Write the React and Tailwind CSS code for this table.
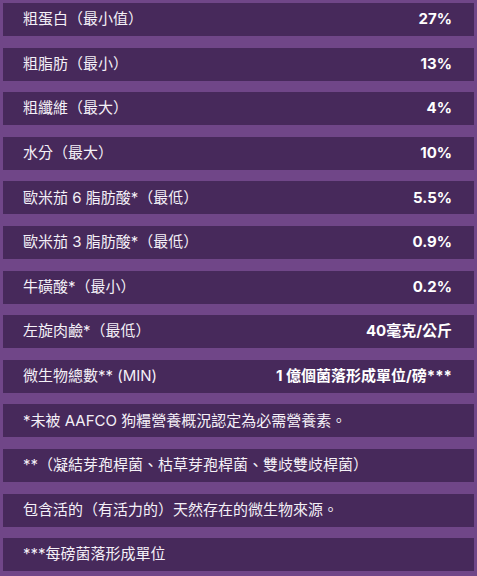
import React from 'react';

const rows = [
    { label: '粗蛋白（最小值）', value: '27%' },
    { label: '粗脂肪（最小）', value: '13%' },
    { label: '粗纖維（最大）', value: '4%' },
    { label: '水分（最大）', value: '10%' },
    { label: '歐米茄 6 脂肪酸*（最低）', value: '5.5%' },
    { label: '歐米茄 3 脂肪酸*（最低）', value: '0.9%' },
    { label: '牛磺酸*（最小）', value: '0.2%' },
    { label: '左旋肉鹼*（最低）', value: '40毫克/公斤' },
    { label: '微生物總數** (MIN)', value: '1 億個菌落形成單位/磅***' },
    { label: '*未被 AAFCO 狗糧營養概況認定為必需營養素。' },
    { label: '**（凝結芽孢桿菌、枯草芽孢桿菌、雙歧雙歧桿菌）' },
    { label: '包含活的（有活力的）天然存在的微生物來源。' },
    { label: '***每磅菌落形成單位' },
];

function App() {
    return (
        <div
            lang="zh-Hant"
            className="w-[477px] h-[576px] bg-[#704688] p-[3px] flex flex-col gap-[11.6px] text-[15px] text-[#f4f0f7]"
            style={{ fontFamily: 'Inter, "Noto Sans CJK TC", sans-serif' }}
        >
            {rows.map((row) => (
                <div key={row.label} className="h-[33px] shrink-0 bg-[#47295b] flex items-center justify-between pl-[20px] pr-[22px]">
                    <span>{row.label}</span>
                    {row.value && <span className="font-bold text-white">{row.value}</span>}
                </div>
            ))}
        </div>
    );
}

export default App;
